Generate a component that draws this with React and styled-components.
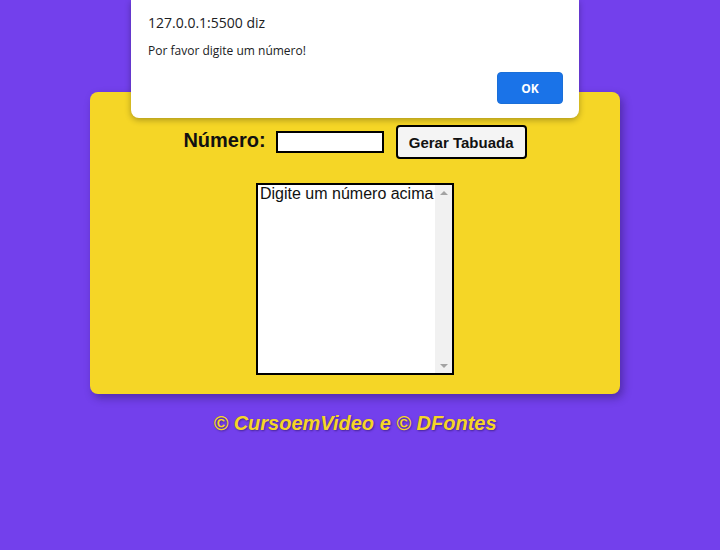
import React from "react";
import styled, { createGlobalStyle } from "styled-components";

const GlobalStyle = createGlobalStyle`
  html, body {
    margin: 0;
    padding: 0;
    background: #7340ec;
    font-family: "Liberation Sans", Arial, sans-serif;
  }
`;

const Page = styled.div`
  position: relative;
  width: 720px;
  height: 550px;
  overflow: hidden;
  padding-top: 92px;
  box-sizing: border-box;
`;

const Card = styled.section`
  width: 530px;
  height: 302px;
  margin-left: 90px;
  box-sizing: border-box;
  background: #f5d626;
  border-radius: 8px;
  box-shadow: 3px 4px 8px rgba(40, 20, 90, 0.45);
  padding-top: 33px;
  display: flex;
  flex-direction: column;
  align-items: center;
`;

const Row = styled.div`
  display: flex;
  align-items: center;
`;

const Label = styled.label`
  font-size: 20px;
  font-weight: bold;
  color: #111;
  margin-right: 10px;
  margin-top: -4px;
`;

const NumberInput = styled.input`
  width: 108px;
  height: 22px;
  box-sizing: border-box;
  border: 2px solid #000;
  background: #fff;
  margin-right: 12px;
  padding: 0;
`;

const Button = styled.button`
  width: 131px;
  height: 34px;
  box-sizing: border-box;
  border: 2px solid #000;
  border-radius: 4px;
  background: #f4f4f4;
  font-family: "Liberation Sans", Arial, sans-serif;
  font-size: 15px;
  font-weight: bold;
  color: #111;
  padding: 0;
`;

const ListBox = styled.div`
  margin-top: 24px;
  width: 198px;
  height: 192px;
  box-sizing: border-box;
  border: 2px solid #000;
  background: #fff;
  display: flex;
`;

const ListText = styled.div`
  flex: 1;
  font-size: 16px;
  color: #111;
  padding: 0 0 0 2px;
  white-space: nowrap;
  overflow: hidden;
`;

const Scrollbar = styled.div`
  width: 17px;
  background: #f1f1f1;
  display: flex;
  flex-direction: column;
  justify-content: space-between;
  align-items: center;
  padding: 6px 0 5px;
`;

const Arrow = styled.div`
  width: 0;
  height: 0;
  border-left: 4px solid transparent;
  border-right: 4px solid transparent;
  ${(p) =>
    p.$down
      ? "border-top: 4px solid #a3a3a3;"
      : "border-bottom: 4px solid #a3a3a3;"}
`;

const Footer = styled.p`
  margin: 18px 0 0;
  text-align: center;
  width: 710px;
  font-size: 20px;
  font-weight: bold;
  font-style: italic;
  color: #f5d626;
  text-shadow: 1px 1px 2px rgba(40, 20, 90, 0.6);
`;

const Dialog = styled.div`
  position: absolute;
  top: 0;
  left: 131px;
  width: 448px;
  height: 118px;
  box-sizing: border-box;
  background: #fff;
  border-radius: 0 0 8px 8px;
  box-shadow: 0 2px 6px rgba(0, 0, 0, 0.3);
  padding: 13px 16px 0 17px;
  font-family: "Open Sans", "Noto Sans", sans-serif;
`;

const Origin = styled.div`
  font-size: 14px;
  color: #202124;
`;

const Message = styled.div`
  margin-top: 10px;
  font-size: 12px;
  color: #202124;
`;

const Actions = styled.div`
  display: flex;
  justify-content: flex-end;
  margin-top: 13px;
`;

const OkButton = styled.button`
  width: 66px;
  height: 32px;
  border: 1px solid #1a6fd8;
  border-radius: 4px;
  background: #1a73e8;
  color: #fff;
  font-family: "Open Sans", "Noto Sans", sans-serif;
  font-size: 12px;
  font-weight: bold;
  padding: 0;
`;

export default function App() {
  return (
    <Page>
      <GlobalStyle />
      <Card>
        <Row>
          <Label>Número:</Label>
          <NumberInput type="text" />
          <Button>Gerar Tabuada</Button>
        </Row>
        <ListBox>
          <ListText>Digite um número acima</ListText>
          <Scrollbar>
            <Arrow />
            <Arrow $down />
          </Scrollbar>
        </ListBox>
      </Card>
      <Footer>© CursoemVideo e © DFontes</Footer>
      <Dialog>
        <Origin>127.0.0.1:5500 diz</Origin>
        <Message>Por favor digite um número!</Message>
        <Actions>
          <OkButton>OK</OkButton>
        </Actions>
      </Dialog>
    </Page>
  );
}
